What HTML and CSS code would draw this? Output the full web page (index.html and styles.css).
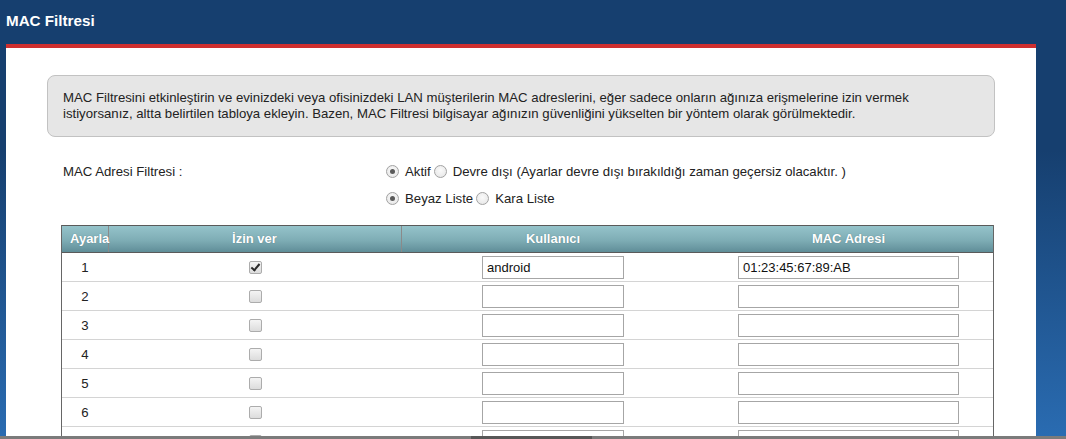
FILE: index.html
```html
<!DOCTYPE html>
<html lang="tr">
<head>
<meta charset="utf-8">
<title>MAC Filtresi</title>
<link rel="stylesheet" href="styles.css">
</head>
<body>
<div class="title">MAC Filtresi</div>
<div class="panel">
  <div class="info">MAC Filtresini etkinleştirin ve evinizdeki veya ofisinizdeki LAN müşterilerin MAC adreslerini, eğer sadece onların ağınıza erişmelerine izin vermek istiyorsanız, altta belirtilen tabloya ekleyin. Bazen, MAC Filtresi bilgisayar ağınızın güvenliğini yükselten bir yöntem olarak görülmektedir.</div>
  <div class="form">
    <div class="frow">
      <div class="flabel">MAC Adresi Filtresi :</div>
      <div class="fopts">
        <span class="radio on"></span><span class="opt">Aktif</span>
        <span class="radio"></span><span class="opt">Devre dışı (Ayarlar devre dışı bırakıldığı zaman geçersiz olacaktır. )</span>
      </div>
    </div>
    <div class="frow">
      <div class="flabel"></div>
      <div class="fopts">
        <span class="radio on"></span><span class="opt">Beyaz Liste</span>
        <span class="radio"></span><span class="opt">Kara Liste</span>
      </div>
    </div>
  </div>
  <div class="table">
    <div class="thead">
      <div class="th th-first">Ayarla</div>
      <div class="th th-mid">İzin ver</div>
      <div class="th">Kullanıcı</div>
      <div class="th">MAC Adresi</div>
    </div>
    <div class="tr">
      <div class="td">1</div>
      <div class="td"><span class="cb checked"></span></div>
      <div class="td"><div class="inp inp-user">android</div></div>
      <div class="td"><div class="inp inp-mac">01:23:45:67:89:AB</div></div>
    </div>
    <div class="tr">
      <div class="td">2</div>
      <div class="td"><span class="cb"></span></div>
      <div class="td"><div class="inp inp-user"></div></div>
      <div class="td"><div class="inp inp-mac"></div></div>
    </div>
    <div class="tr">
      <div class="td">3</div>
      <div class="td"><span class="cb"></span></div>
      <div class="td"><div class="inp inp-user"></div></div>
      <div class="td"><div class="inp inp-mac"></div></div>
    </div>
    <div class="tr">
      <div class="td">4</div>
      <div class="td"><span class="cb"></span></div>
      <div class="td"><div class="inp inp-user"></div></div>
      <div class="td"><div class="inp inp-mac"></div></div>
    </div>
    <div class="tr">
      <div class="td">5</div>
      <div class="td"><span class="cb"></span></div>
      <div class="td"><div class="inp inp-user"></div></div>
      <div class="td"><div class="inp inp-mac"></div></div>
    </div>
    <div class="tr">
      <div class="td">6</div>
      <div class="td"><span class="cb"></span></div>
      <div class="td"><div class="inp inp-user"></div></div>
      <div class="td"><div class="inp inp-mac"></div></div>
    </div>
    <div class="tr">
      <div class="td">7</div>
      <div class="td"><span class="cb"></span></div>
      <div class="td"><div class="inp inp-user"></div></div>
      <div class="td"><div class="inp inp-mac"></div></div>
    </div>
    <div class="tr">
      <div class="td">8</div>
      <div class="td"><span class="cb"></span></div>
      <div class="td"><div class="inp inp-user"></div></div>
      <div class="td"><div class="inp inp-mac"></div></div>
    </div>
  </div>
</div>
<div class="statusbar"></div>
</body>
</html>
```
FILE: styles.css
```css
html, body {
  margin: 0;
  padding: 0;
  height: 100%;
  overflow: hidden;
}
body {
  background: linear-gradient(to bottom, #163f6f 0px, #163f6f 150px, #2a6cb2 439px);
  font-family: "Liberation Sans", Arial, sans-serif;
  font-size: 13.2px;
  color: #222;
}
.title {
  height: 44px;
  box-sizing: border-box;
  padding: 12px 0 0 6px;
  color: #fff;
  font-weight: bold;
  font-size: 15.2px;
  line-height: 18px;
}
.panel {
  margin: 0 30px 0 6px;
  border-top: 4px solid #cf2f2f;
  background: #fff;
  padding: 27px 41px 0 41px;
  height: 600px;
}
.info {
  background: #e6e6e6;
  border: 1px solid #c2c2c2;
  border-radius: 8px;
  padding: 14px 15px;
  line-height: 16px;
  color: #222;
}
.form {
  padding: 21px 0 0 16px;
}
.frow {
  display: flex;
  height: 27px;
  align-items: center;
}
.flabel {
  width: 322px;
  flex: none;
}
.fopts {
  display: flex;
  align-items: center;
}
.radio {
  display: inline-block;
  box-sizing: border-box;
  width: 13px;
  height: 13px;
  border-radius: 50%;
  border: 1px solid #a2a2a2;
  background: radial-gradient(circle at 50% 40%, #fafafa 0, #e4e4e4 100%);
  margin: 0 6px 0 1px;
  position: relative;
}
.radio.on::after {
  content: "";
  position: absolute;
  left: 3px;
  top: 3px;
  width: 5px;
  height: 5px;
  border-radius: 50%;
  background: #5a5a5a;
}
.opt {
  margin-right: 2px;
}
.table {
  margin: 13px 0 0 14px;
  width: 933px;
  box-sizing: border-box;
  border-left: 1px solid #666;
  border-right: 1px solid #666;
}
.thead {
  display: grid;
  grid-template-columns: 46px 294px 302px 1fr;
  height: 26px;
  border-top: 1px solid #5a5a5a;
  border-bottom: 1px solid #5a5a5a;
  background: linear-gradient(to bottom, #95c3ca 0%, #7eadb5 55%, #6a98a2 85%, #5f8d97 100%);
}
.th {
  color: #fff;
  font-weight: bold;
  font-size: 13px;
  line-height: 26px;
  text-align: center;
  white-space: nowrap;
  text-shadow: 0 0 1px rgba(40, 70, 80, 0.5);
}
.th-first {
  text-align: left;
  padding-left: 8px;
  border-right: 1px solid #8a8a8a;
  box-sizing: border-box;
  width: 47px;
}
.th-mid {
  border-right: 1px solid #8a8a8a;
}
.tr {
  display: grid;
  grid-template-columns: 46px 294px 302px 1fr;
  height: 28px;
  border-bottom: 1px solid #d4d4d4;
  align-items: center;
}
.td {
  display: flex;
  justify-content: center;
  align-items: center;
}
.cb {
  display: inline-block;
  box-sizing: border-box;
  width: 13px;
  height: 13px;
  border: 1px solid #acacac;
  border-radius: 2px;
  background: linear-gradient(to bottom, #f4f4f4, #dcdcdc);
  position: relative;
}
.cb.checked::after {
  content: "";
  position: absolute;
  left: 3px;
  top: 0px;
  width: 3px;
  height: 7px;
  border: solid #2a2a2a;
  border-width: 0 2px 2px 0;
  transform: rotate(40deg);
}
.inp {
  box-sizing: border-box;
  height: 23px;
  border: 1px solid #a6a6a6;
  background: #fff;
  padding: 0 4px;
  font-size: 13px;
  line-height: 21px;
  color: #111;
  text-align: left;
}
.inp-user {
  width: 142px;
}
.inp-mac {
  width: 221px;
}
.statusbar {
  position: fixed;
  left: 0;
  right: 0;
  bottom: 0;
  height: 3px;
  background: linear-gradient(to right, #7b7b7b 0, #7b7b7b 471px, #575757 471px, #575757 592px, #7b7b7b 592px);
}
```
